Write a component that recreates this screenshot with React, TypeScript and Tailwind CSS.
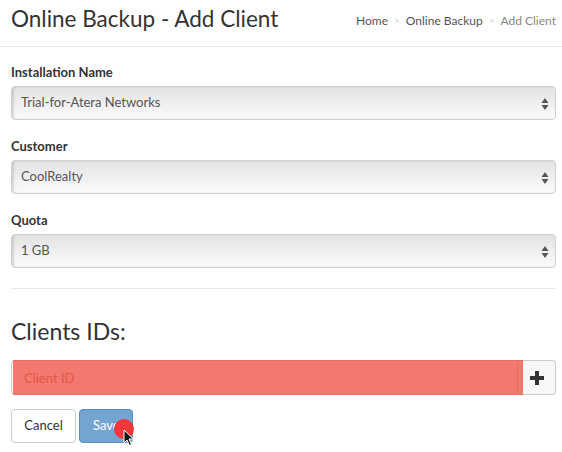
import React from 'react';

const font = { fontFamily: '"Source Sans Pro", Lato, "Liberation Sans", sans-serif' };

const SelectBox: React.FC<{ value: string }> = ({ value }) => (
  <div className="relative flex h-[34px] items-center rounded-[4px] border border-[#cfcfcf] bg-gradient-to-b from-[#e3e3e3] to-[#fbfbfb] pl-[9px] text-[13px] text-[#555] shadow-[inset_2px_0_2px_rgba(0,0,0,0.12)]">
    <span>{value}</span>
    <svg className="absolute right-[6px] top-[11px]" width="8" height="12" viewBox="0 0 8 12">
      <path d="M4 0 L7.5 5 H0.5 Z" fill="#555" />
      <path d="M0.5 7 H7.5 L4 12 Z" fill="#555" />
    </svg>
  </div>
);

const Field: React.FC<{ label: string; value: string }> = ({ label, value }) => (
  <div className="flex flex-col gap-[5px]">
    <label className="text-[13px] font-bold leading-[18px] text-[#333]">{label}</label>
    <SelectBox value={value} />
  </div>
);

export default function App() {
  return (
    <div className="h-[452px] w-[562px] overflow-hidden bg-white" style={font}>
      {/* Header */}
      <div className="flex h-[47px] items-center justify-between border-b border-[#e8e8e8] pb-[8px] pl-[11px] pr-[6px]">
        <h1 className="text-[22.5px] leading-none text-[#333]">Online Backup - Add Client</h1>
        <div className="flex items-center gap-[6px] pt-[3px] text-[12px] text-[#555]">
          <span>Home</span>
          <span className="text-[10px] text-[#ccc]">&gt;</span>
          <span>Online Backup</span>
          <span className="text-[10px] text-[#ccc]">&gt;</span>
          <span className="text-[#888]">Add Client</span>
        </div>
      </div>

      <div className="px-[11px] pr-[6px]">
        <div className="flex flex-col gap-[17px] pt-[16px]">
          <Field label="Installation Name" value="Trial-for-Atera Networks" />
          <Field label="Customer" value="CoolRealty" />
          <Field label="Quota" value="1 GB" />
        </div>

        <div className="mt-[20px] border-t border-[#e8e8e8]" />

        <h2 className="mt-[31px] text-[23px] leading-none text-[#333]">Clients IDs:</h2>

        {/* Client ID input group */}
        <div className="relative mt-[17px] flex h-[35px]">
          <input
            placeholder="Client ID"
            className="h-full flex-1 rounded-l-[4px] border border-[#ccc] px-[12px] text-[13px] text-[#555] placeholder:text-[#b04c44] outline-none"
          />
          <button className="flex w-[38px] items-center justify-center rounded-r-[4px] border border-l-0 border-[#ccc] bg-[#f7f7f7]">
            <svg width="14" height="14" viewBox="0 0 14 14">
              <path d="M5 0 H9 V5 H14 V9 H9 V14 H5 V9 H0 V5 H5 Z" fill="#333" />
            </svg>
          </button>
          <div className="pointer-events-none absolute left-[2px] top-0 h-[35px] w-[510px] bg-[#f0574a]/80" />
        </div>

        {/* Buttons */}
        <div className="mt-[14px] flex gap-[3px]">
          <button className="h-[34px] w-[65px] rounded-[4px] border border-[#ccc] bg-white text-[13px] text-[#333]">Cancel</button>
          <div className="relative">
            <button className="h-[34px] w-[54px] rounded-[4px] border border-[#5b8fc0] bg-[#74a5d1] pl-[13px] text-left text-[13px] text-white">Save</button>
            <div className="absolute left-[35px] top-[10px] h-[20px] w-[20px] rounded-full bg-[#f2363a]" />
            <svg className="absolute left-[44px] top-[20px]" width="12" height="18" viewBox="0 0 12 18">
              <path d="M1 1 V14 L4 11 L6.5 16.5 L8.5 15.5 L6 10 H10.5 Z" fill="#111" stroke="#fff" strokeWidth="1" />
            </svg>
          </div>
        </div>
      </div>
    </div>
  );
}
